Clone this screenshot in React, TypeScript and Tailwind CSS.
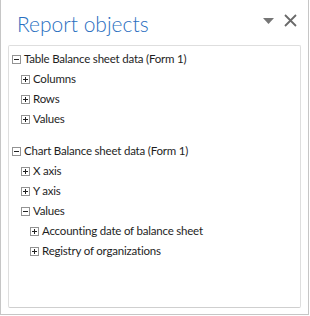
import { useState } from "react";

type Node = { label: string; open?: boolean; children?: Node[] };

const tree: Node[] = [
  {
    label: "Table Balance sheet data (Form 1)",
    open: true,
    children: [{ label: "Columns" }, { label: "Rows" }, { label: "Values" }],
  },
  {
    label: "Chart Balance sheet data (Form 1)",
    open: true,
    children: [
      { label: "X axis" },
      { label: "Y axis" },
      {
        label: "Values",
        open: true,
        children: [{ label: "Accounting date of balance sheet" }, { label: "Registry of organizations" }],
      },
    ],
  },
];

function Expander({ open }: { open?: boolean }) {
  return (
    <svg width="9" height="9" viewBox="0 0 9 9" className="shrink-0">
      <rect x="0.5" y="0.5" width="8" height="8" fill="#fff" stroke="#939393" />
      <path d="M2 4.5h5" stroke="#222" />
      {!open && <path d="M4.5 2v5" stroke="#222" />}
    </svg>
  );
}

function TreeRow({ node, depth }: { node: Node; depth: number }) {
  const [open, setOpen] = useState(!!node.open);
  return (
    <>
      <div
        className="flex h-5 items-center gap-[3px] cursor-default"
        style={{ paddingLeft: depth * 9 }}
        onClick={() => setOpen(!open)}
      >
        <Expander open={open} />
        <span className="leading-none">{node.label}</span>
      </div>
      {open && node.children?.map((c) => <TreeRow key={c.label} node={c} depth={depth + 1} />)}
    </>
  );
}

export default function App() {
  return (
    <div className="h-[316px] w-[310px] bg-white">
      <div className="flex h-[315px] w-[309px] flex-col border-x border-b border-[#c6c6c6] bg-white px-[7px] pb-[6px]">
        <div className="flex h-[45px] items-start justify-between">
          <h1 className="pl-[9px] pt-[10px] font-['Lato',sans-serif] text-[21px] font-light leading-[28px] text-[#2b6fbf]">
            Report objects
          </h1>
          <div className="flex items-center gap-[10px] pr-[4px] pt-[14px]">
            <svg width="11" height="6" viewBox="0 0 11 6">
              <path d="M0 0h11L5.5 6z" fill="#767676" />
            </svg>
            <svg width="13" height="13" viewBox="0 0 13 13">
              <path d="M1 1l11 11M12 1L1 12" stroke="#6a6a6a" strokeWidth="1.8" />
            </svg>
          </div>
        </div>
        <div className="flex-1 rounded-[2px] border border-[#dedede] border-b-[#cfcfcf] pl-[3px] pt-[3px] font-['Lato',sans-serif] text-[11.5px] tracking-[-0.2px] text-[#1e1e1e]">
          {tree.map((n, i) => (
            <div key={n.label} className={i > 0 ? "mt-3" : ""}>
              <TreeRow node={n} depth={0} />
            </div>
          ))}
        </div>
      </div>
    </div>
  );
}
